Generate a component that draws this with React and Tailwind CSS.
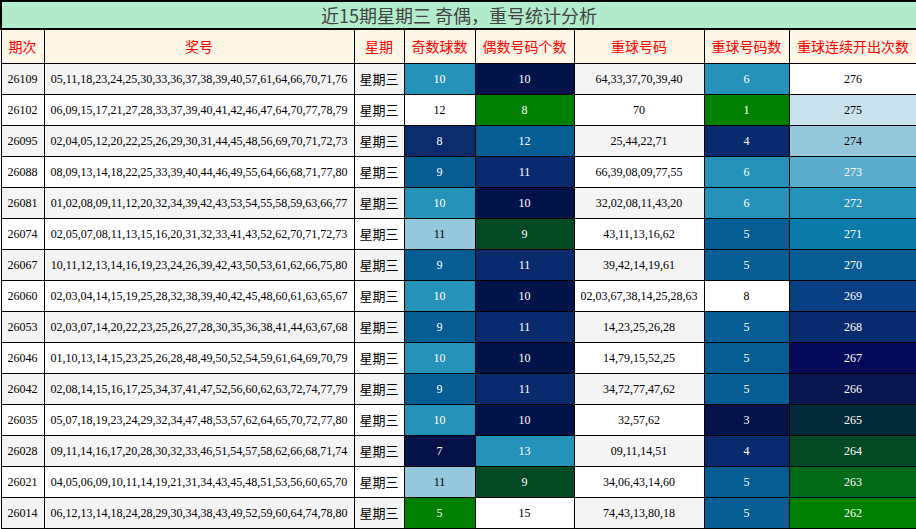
import React from 'react';

const rows = [
  ['26109', '05,11,18,23,24,25,30,33,36,37,38,39,40,57,61,64,66,70,71,76', 10, 10, '64,33,37,70,39,40', 6, 276],
  ['26102', '06,09,15,17,21,27,28,33,37,39,40,41,42,46,47,64,70,77,78,79', 12, 8, '70', 1, 275],
  ['26095', '02,04,05,12,20,22,25,26,29,30,31,44,45,48,56,69,70,71,72,73', 8, 12, '25,44,22,71', 4, 274],
  ['26088', '08,09,13,14,18,22,25,33,39,40,44,46,49,55,64,66,68,71,77,80', 9, 11, '66,39,08,09,77,55', 6, 273],
  ['26081', '01,02,08,09,11,12,20,32,34,39,42,43,53,54,55,58,59,63,66,77', 10, 10, '32,02,08,11,43,20', 6, 272],
  ['26074', '02,05,07,08,11,13,15,16,20,31,32,33,41,43,52,62,70,71,72,73', 11, 9, '43,11,13,16,62', 5, 271],
  ['26067', '10,11,12,13,14,16,19,23,24,26,39,42,43,50,53,61,62,66,75,80', 9, 11, '39,42,14,19,61', 5, 270],
  ['26060', '02,03,04,14,15,19,25,28,32,38,39,40,42,45,48,60,61,63,65,67', 10, 10, '02,03,67,38,14,25,28,63', 8, 269],
  ['26053', '02,03,07,14,20,22,23,25,26,27,28,30,35,36,38,41,44,63,67,68', 9, 11, '14,23,25,26,28', 5, 268],
  ['26046', '01,10,13,14,15,23,25,26,28,48,49,50,52,54,59,61,64,69,70,79', 10, 10, '14,79,15,52,25', 5, 267],
  ['26042', '02,08,14,15,16,17,25,34,37,41,47,52,56,60,62,63,72,74,77,79', 9, 11, '34,72,77,47,62', 5, 266],
  ['26035', '05,07,18,19,23,24,29,32,34,47,48,53,57,62,64,65,70,72,77,80', 10, 10, '32,57,62', 3, 265],
  ['26028', '09,11,14,16,17,20,28,30,32,33,46,51,54,57,58,62,66,68,71,74', 7, 13, '09,11,14,51', 4, 264],
  ['26021', '04,05,06,09,10,11,14,19,21,31,34,43,45,48,51,53,56,60,65,70', 11, 9, '34,06,43,14,60', 5, 263],
  ['26014', '06,12,13,14,18,24,28,29,30,34,38,43,49,52,59,60,64,74,78,80', 5, 15, '74,43,13,80,18', 5, 262],
];

const oddC = { 10: 'bg-[#2592b9] text-white', 12: 'bg-white text-black', 8: 'bg-[#0b2c6c] text-white', 9: 'bg-[#065d94] text-white', 11: 'bg-[#95c8dc] text-black', 7: 'bg-[#06134a] text-white', 5: 'bg-[#008000] text-white' };
const evenC = { 10: 'bg-[#02134a] text-white', 8: 'bg-[#008000] text-white', 12: 'bg-[#065d94] text-white', 11: 'bg-[#0a2a6e] text-white', 9: 'bg-[#044a24] text-white', 13: 'bg-[#2592b9] text-white', 15: 'bg-white text-black' };
const repC = { 6: 'bg-[#2592b9] text-white', 1: 'bg-[#008000] text-white', 4: 'bg-[#0a2a6e] text-white', 5: 'bg-[#065d94] text-white', 8: 'bg-white text-black', 3: 'bg-[#06134a] text-white' };
const runC = ['bg-white text-black', 'bg-[#c9e2ec] text-black', 'bg-[#96c8dc] text-black', 'bg-[#5badcb] text-white', 'bg-[#2592b9] text-white', 'bg-[#0a7aa8] text-white', 'bg-[#065d94] text-white', 'bg-[#073f82] text-white', 'bg-[#0a2a6e] text-white', 'bg-[#05095a] text-white', 'bg-[#07164e] text-white', 'bg-[#032a38] text-white', 'bg-[#044a24] text-white', 'bg-[#036a18] text-white', 'bg-[#008000] text-white'];

const heads = ['期次', '奖号', '星期', '奇数球数', '偶数号码个数', '重球号码', '重球号码数', '重球连续开出次数'];
const widths = ['w-[43px]', 'w-[310px]', 'w-[50px]', 'w-[71px]', 'w-[99px]', 'w-[130px]', 'w-[85px]', 'w-[128px]'];

export default function App() {
  return (
    <div className="w-[916px] h-[529px] overflow-hidden bg-white font-[Liberation_Serif,Noto_Sans_CJK_SC,serif]">
      <table className="w-[916px] table-fixed border-collapse text-[12px] leading-none text-black">
        <colgroup>
          {widths.map((w, i) => <col key={i} className={w} />)}
        </colgroup>
        <tbody>
          <tr className="h-[28px]">
            <td colSpan={8} className="border-2 border-black bg-[#b3ebcd] text-center text-[18px] text-[#444] font-[Noto_Sans_CJK_SC,sans-serif]">
              近15期星期三 奇偶，重号统计分析
            </td>
          </tr>
          <tr className="h-[34px] bg-[#fdf5e6]">
            {heads.map((h) => (
              <td key={h} className="border border-black text-center text-[14px] text-[#ff0000] font-[Noto_Sans_CJK_SC,sans-serif]">{h}</td>
            ))}
          </tr>
          {rows.map((r, i) => {
            const bg = i % 2 === 0 ? 'bg-[#f4f4f4]' : 'bg-white';
            return (
              <tr key={r[0]} className="h-[31px]">
                <td className={`border border-black text-center ${bg}`}>{r[0]}</td>
                <td className={`border border-black text-center whitespace-nowrap ${bg}`}>{r[1]}</td>
                <td className={`border border-black text-center text-[13px] font-[Noto_Sans_CJK_SC,sans-serif] ${bg}`}>星期三</td>
                <td className={`border border-black text-center ${oddC[r[2]]}`}>{r[2]}</td>
                <td className={`border border-black text-center ${evenC[r[3]]}`}>{r[3]}</td>
                <td className={`border border-black text-center whitespace-nowrap ${bg}`}>{r[4]}</td>
                <td className={`border border-black text-center ${repC[r[5]]}`}>{r[5]}</td>
                <td className={`border border-black text-center ${runC[i]}`}>{r[6]}</td>
              </tr>
            );
          })}
        </tbody>
      </table>
    </div>
  );
}
